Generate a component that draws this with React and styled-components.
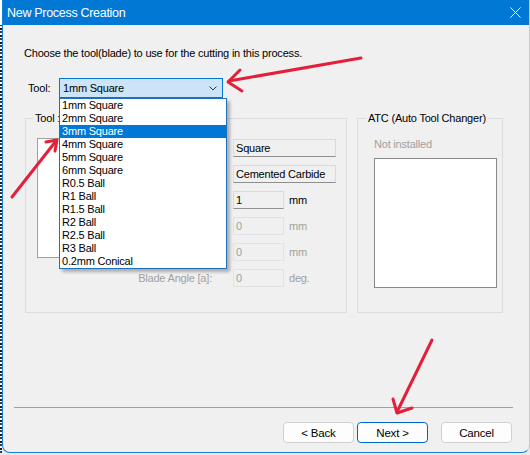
import React from "react";
import styled, { createGlobalStyle } from "styled-components";

const GlobalStyle = createGlobalStyle`
  html, body { margin: 0; padding: 0; background: #ffffff; }
  body { font-family: "Liberation Sans", Arial, sans-serif; }
  * { box-sizing: border-box; }
`;

const Page = styled.div`
  position: relative;
  width: 530px;
  height: 455px;
  display: flex;
  align-items: flex-start;
  background: #e9e9e9;
  overflow: hidden;
`;

const LeftStrip = styled.div`
  width: 2px;
  height: 453px;
  background:
    linear-gradient(#ffffff, #ffffff) top / 2px 25px no-repeat,
    repeating-linear-gradient(#1a1a1a 0 2px, #ffffff 2px 3px, #3a3a3a 3px 5px, #f4f4f4 5px 7px);
`;

const Window = styled.div`
  width: 528px;
  height: 453px;
  display: flex;
  flex-direction: column;
  border-left: 1px solid #1680d6;
  border-right: 1px solid #c9c9c9;
  border-bottom: 1px solid #1680d6;
  border-radius: 0 0 8px 8px;
  overflow: hidden;
  background: #f0f0f0;
  font-size: 11px;
  letter-spacing: -0.2px;
  color: #000;
`;

const TitleBar = styled.div`
  height: 25px;
  flex: none;
  display: flex;
  align-items: center;
  justify-content: space-between;
  background: #0078d4;
  color: #ffffff;
  padding: 0 8px 0 4px;
  font-size: 12.5px;
  letter-spacing: -0.3px;
`;

const CloseIcon = styled.svg`
  width: 11px;
  height: 11px;
  display: block;
`;

const Body = styled.div`
  flex: 1;
  display: flex;
  flex-direction: column;
  padding-top: 21px;
`;

const Instruction = styled.div`
  margin-left: 21px;
  line-height: 14px;
  height: 14px;
`;

const ToolRow = styled.div`
  display: flex;
  align-items: center;
  margin: 18px 0 0 25px;
  height: 20px;
`;

const ToolLabel = styled.div`
  width: 31px;
  line-height: 14px;
`;

const ComboWrap = styled.div`
  position: relative;
  width: 164px;
  height: 20px;
`;

const Combo = styled.div`
  height: 20px;
  display: flex;
  align-items: center;
  justify-content: space-between;
  padding: 0 5px 0 3px;
  background: #cce4f7;
  border: 1px solid #0078d7;
`;

const Chevron = styled.svg`
  width: 8px;
  height: 5px;
  display: block;
`;

const DropList = styled.ul`
  position: absolute;
  top: 20px;
  left: 0;
  z-index: 10;
  width: 168px;
  margin: 0;
  padding: 0;
  list-style: none;
  background: #ffffff;
  border: 1px solid #1f6fbf;
  box-shadow: 3px 3px 3px rgba(0, 0, 0, 0.28);
`;

const DropItem = styled.li`
  height: 13px;
  line-height: 13px;
  padding-left: 2px;
  background: ${(p) => (p.$active ? "#0078d7" : "transparent")};
  color: ${(p) => (p.$active ? "#ffffff" : "#000000")};
  white-space: nowrap;
`;

const GroupsRow = styled.div`
  display: flex;
  gap: 10px;
  margin: 20px 0 0 22px;
`;

const GroupBox = styled.div`
  position: relative;
  width: ${(p) => p.$w}px;
  height: 195px;
  border: 1px solid #dcdcdc;
  padding: ${(p) => p.$pad};
`;

const Legend = styled.div`
  position: absolute;
  top: -8px;
  left: ${(p) => p.$left}px;
  padding: 0 2px;
  line-height: 14px;
  background: #f0f0f0;
  white-space: nowrap;
`;

const ToolBody = styled.div`
  display: flex;
  align-items: flex-start;
`;

const ImageBox = styled.div`
  width: 82px;
  height: 120px;
  background: #ffffff;
  border: 1px solid #a0a0a0;
  flex: none;
`;

const FieldList = styled.div`
  display: flex;
  flex-direction: column;
  gap: 8px;
  margin-top: 1px;
`;

const FieldRow = styled.div`
  display: flex;
  align-items: center;
  height: 18px;
`;

const FieldLabel = styled.div`
  width: 93px;
  margin-right: 21px;
  text-align: right;
  color: ${(p) => (p.$disabled ? "#a0a0a0" : "#000000")};
  white-space: nowrap;
`;

const Field = styled.div`
  width: ${(p) => (p.$wide ? 103 : 51)}px;
  height: 18px;
  line-height: 16px;
  padding-left: 2px;
  background: #f0f0f0;
  border: 1px solid ${(p) => (p.$disabled ? "#e2e2e2" : "#dadada")};
  border-bottom-color: ${(p) => (p.$disabled ? "#e2e2e2" : "#8f8f8f")};
  color: ${(p) => (p.$disabled ? "#a0a0a0" : "#000000")};
  white-space: nowrap;
`;

const Unit = styled.div`
  margin-left: 5px;
  color: ${(p) => (p.$disabled ? "#a0a0a0" : "#000000")};
`;

const Muted = styled.div`
  line-height: 14px;
  color: #a0a0a0;
`;

const AtcList = styled.div`
  width: 123px;
  height: 130px;
  margin-top: 7px;
  background: #ffffff;
  border: 1px solid #8a8a8a;
`;

const Footer = styled.div`
  margin-top: auto;
  display: flex;
  flex-direction: column;
  padding-bottom: 9px;
`;

const Separator = styled.div`
  height: 1px;
  width: 499px;
  margin-left: 11px;
  background: #a0a0a0;
`;

const ButtonRow = styled.div`
  display: flex;
  justify-content: flex-end;
  padding-right: 17px;
  margin-top: 14px;
`;

const Button = styled.button`
  width: 71px;
  height: 21px;
  margin-left: ${(p) => p.$gap}px;
  padding: 0;
  font-family: inherit;
  font-size: 11.5px;
  letter-spacing: -0.2px;
  color: #000;
  background: #fdfdfd;
  border: 1px solid ${(p) => (p.$primary ? "#0067c0" : "#d0d0d0")};
  border-radius: 4px;
`;

const Overlay = styled.svg`
  position: absolute;
  left: 0;
  top: 0;
  width: 530px;
  height: 455px;
  pointer-events: none;
  z-index: 20;
`;

const tools = [
  "1mm Square",
  "2mm Square",
  "3mm Square",
  "4mm Square",
  "5mm Square",
  "6mm Square",
  "R0.5 Ball",
  "R1 Ball",
  "R1.5 Ball",
  "R2 Ball",
  "R2.5 Ball",
  "R3 Ball",
  "0.2mm Conical",
];

const fields = [
  { label: "Blade Type:", value: "Square", wide: true },
  { label: "Material:", value: "Cemented Carbide", wide: true },
  { label: "Diameter [D]:", value: "1", unit: "mm" },
  { label: "Length [L]:", value: "0", unit: "mm", disabled: true },
  { label: "Tip Width [W]:", value: "0", unit: "mm", disabled: true },
  { label: "Blade Angle [a]:", value: "0", unit: "deg.", disabled: true },
];

const arrows = [
  { line: "M361 58 L229 81", head: "M240 70 L228 82 L242 91" },
  { line: "M12 197 L56 141", head: "M46 142 L57 140 L55 151" },
  { line: "M432 340 L397 412", head: "M393 399 L397 413 L412 408" },
];

export default function App() {
  return (
    <>
      <GlobalStyle />
      <Page>
        <LeftStrip />
        <Window>
          <TitleBar>
            <span>New Process Creation</span>
            <CloseIcon viewBox="0 0 11 11">
              <path d="M0.5 0.5 L10.5 10.5 M10.5 0.5 L0.5 10.5" stroke="#ffffff" strokeWidth="1" />
            </CloseIcon>
          </TitleBar>
          <Body>
            <Instruction>Choose the tool(blade) to use for the cutting in this process.</Instruction>
            <ToolRow>
              <ToolLabel>Tool:</ToolLabel>
              <ComboWrap>
                <Combo>
                  <span>1mm Square</span>
                  <Chevron viewBox="0 0 8 5">
                    <path d="M0.5 0.5 L4 4 L7.5 0.5" fill="none" stroke="#333" strokeWidth="1" />
                  </Chevron>
                </Combo>
                <DropList>
                  {tools.map((t) => (
                    <DropItem key={t} $active={t === "3mm Square"}>
                      {t}
                    </DropItem>
                  ))}
                </DropList>
              </ComboWrap>
            </ToolRow>
            <GroupsRow>
              <GroupBox $w={322} $pad="19px 0 0 11px">
                <Legend $left={7}>Tool :</Legend>
                <ToolBody>
                  <ImageBox />
                  <FieldList>
                    {fields.map((f) => (
                      <FieldRow key={f.label}>
                        <FieldLabel $disabled={f.disabled}>{f.label}</FieldLabel>
                        <Field $wide={f.wide} $disabled={f.disabled}>
                          {f.value}
                        </Field>
                        {f.unit && <Unit $disabled={f.disabled}>{f.unit}</Unit>}
                      </FieldRow>
                    ))}
                  </FieldList>
                </ToolBody>
              </GroupBox>
              <GroupBox $w={146} $pad="18px 0 0 16px">
                <Legend $left={8}>ATC (Auto Tool Changer)</Legend>
                <Muted>Not installed</Muted>
                <AtcList />
              </GroupBox>
            </GroupsRow>
            <Footer>
              <Separator />
              <ButtonRow>
                <Button $gap={0}>&lt; Back</Button>
                <Button $gap={3} $primary>
                  Next &gt;
                </Button>
                <Button $gap={13}>Cancel</Button>
              </ButtonRow>
            </Footer>
          </Body>
        </Window>
        <Overlay viewBox="0 0 530 455">
          {arrows.map((a, i) => (
            <g key={i} fill="none" stroke="#e41f3a" strokeWidth="3" strokeLinecap="round" strokeLinejoin="round">
              <path d={a.line} />
              <path d={a.head} />
            </g>
          ))}
        </Overlay>
      </Page>
    </>
  );
}
